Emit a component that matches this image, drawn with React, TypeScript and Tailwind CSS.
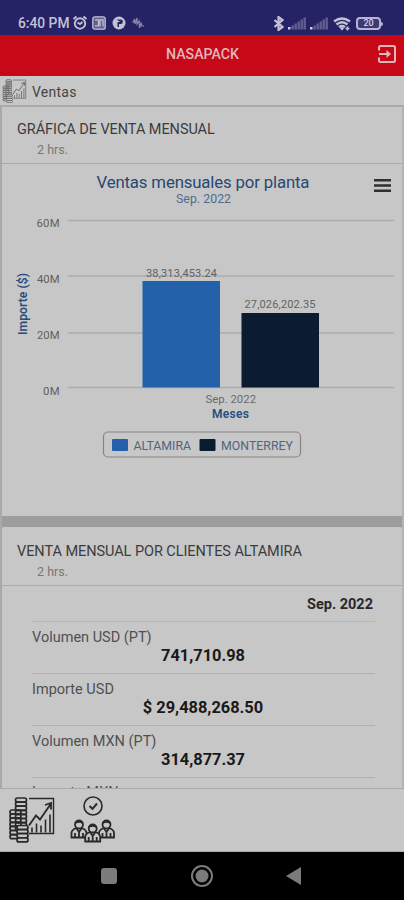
import React from "react";

function CoinsChartIcon({ className }: { className: string }) {
  const stack = (x: number, top: number, count: number) =>
    Array.from({ length: count }, (_, i) => (
      <rect key={`${x}-${i}`} x={x} y={top + i * 4.1} width="11" height="4.1" rx="2" />
    ));
  return (
    <svg viewBox="0 0 46 46" className={className} fill="none" stroke="currentColor" strokeWidth="1.7">
      <path d="M20 2h24.500v35H20" strokeWidth="1.400" />
      <path d="m20 29 7-10 4 4L42 7m-6 1.500 6-2v6.500" strokeWidth="1.800" />
      <path d="M23 36v-5m4.500 5v-9m4.500 9v-7M36.500 36V23M41 36V18" strokeWidth="1.600" />
      {stack(6.5, 1.5, 8)}
      {stack(1, 13.5, 7)}
      <g fill="#c7c7c7">{stack(8, 29, 4)}</g>
    </svg>
  );
}

function Person({ x, y }: { x: number; y: number }) {
  return (
    <g transform={`translate(${x} ${y})`}>
      <path d="M0 17.500V13c0-3 2-4 5-5h5c3 1 5 2 5 5v4.500Z" fill="#c7c7c7" />
      <circle cx="7.500" cy="4.500" r="4" fill="#c7c7c7" />
      <path d="M3.800 3q3.700-2.500 7.400 0M5 8.500l2.500 3.500L10 8.500M3.500 17v-4m8 4v-4M7.500 11v6" />
    </g>
  );
}

function TeamIcon() {
  return (
    <svg viewBox="0 0 46 47" className="h-[47px] w-[46px]" fill="none" stroke="currentColor" strokeWidth="1.800">
      <circle cx="23" cy="10" r="9" strokeWidth="1.600" />
      <path d="m19.500 10 3 2.800 4.500-5.300" strokeWidth="2" />
      <Person x={1.5} y={24} />
      <Person x={29} y={24} />
      <Person x={15.2} y={28} />
    </svg>
  );
}

function Signal() {
  return (
    <svg viewBox="0 0 19 13" className="h-[13px] w-[19px]" fill="#615e8e">
      <rect x="0" y="10" width="2.500" height="2.500" fill="#cfcfdb" />
      <rect x="3.500" y="8.500" width="2.400" height="4" />
      <rect x="6.500" y="6.500" width="2.400" height="6" />
      <rect x="9.500" y="4.500" width="2.400" height="8" />
      <rect x="12.500" y="2.500" width="2.400" height="10" />
      <rect x="15.500" y="0.500" width="2.400" height="12" />
    </svg>
  );
}

function StatusBar() {
  return (
    <div className="flex h-[35px] shrink-0 items-end justify-between bg-[#262266] pb-1 pl-[18px] pr-[21px] text-[#c3c2d2]">
      <div className="flex items-center">
        <span className="w-[54px] whitespace-nowrap text-[13.800px] font-medium leading-[16px]">6:40 PM</span>
        <svg viewBox="0 0 16 16" className="h-4 w-4" fill="none" stroke="currentColor" strokeWidth="1.900">
          <circle cx="8" cy="8.500" r="5.200" />
          <path d="M1.500 4 4.500 1.500M14.500 4l-3-2.500M5.500 7.500 8 9l2.500-2" />
        </svg>
        <svg viewBox="0 0 14 14" className="ml-[4px] h-[14px] w-[14px]" fill="none" stroke="currentColor" strokeWidth="1.300">
          <rect x="0.800" y="0.800" width="12.400" height="12.400" rx="2" fill="#615e8e" />
          <path d="M3 3.800h3.500v6H3M8 10.500V3.800h3v6.700" />
        </svg>
        <svg viewBox="0 0 14 14" className="ml-[6px] h-[14px] w-[14px]">
          <circle cx="7" cy="7" r="6.500" fill="currentColor" />
          <path d="M4.500 3.500h4.200a2.200 2.200 0 0 1 0 4.400H7v3.100H5.500V6h3" fill="#262266" />
        </svg>
        <svg viewBox="0 0 14 12" className="ml-[5px] h-3 w-[14px]" fill="none" stroke="#8c89ae" strokeWidth="1.200">
          <path d="M1 5h1.500l1-3 .5 5 2-6v6l2-3 .5 7L10 6l1 3h2" />
        </svg>
      </div>
      <div className="flex items-center">
        <svg viewBox="0 0 11 15" className="mr-[4px] h-[15px] w-[11px]" fill="none" stroke="currentColor" strokeWidth="2.200">
          <path d="m1.500 4 8 7-4 3V1l4 3-8 7" />
        </svg>
        <Signal />
        <span className="w-[3px]" />
        <Signal />
        <svg viewBox="0 0 18 14" className="ml-[4px] h-[14px] w-[18px]" fill="none" stroke="currentColor" strokeWidth="2.300">
          <path d="M1 4.500q8-6 16 0M3.500 7.500q5.500-4.500 11 0M6 10.200q3-2.400 6 0" />
          <path d="m9 9.500 2 2-2 2-2-2Z" fill="currentColor" stroke="none" />
          <path d="M12.500 11.500h4m-2-2v4" strokeWidth="1.500" />
        </svg>
        <span className="ml-[5px] flex h-[13px] w-[25px] items-center justify-center rounded-[4px] border-2 border-[#b7b5ce] bg-[#3d3975] text-[9px] font-medium leading-none text-[#d5d4df]">
          20
        </span>
        <span className="h-[4px] w-[2px] rounded-r bg-[#b7b5ce]" />
      </div>
    </div>
  );
}

function SalesChart() {
  const grid = [
    { y: 220.500, label: "60M", ty: 226.500, x: 36.5, w: 23 },
    { y: 276, label: "40M", ty: 282.500, x: 37, w: 22.5 },
    { y: 333, label: "20M", ty: 338.500, x: 37, w: 22.5 },
    { y: 387.500, label: "0M", ty: 394.500, x: 43, w: 16.5 },
  ];
  return (
    <svg viewBox="2 164 400 352" className="block h-[352px] w-[400px]" fontFamily="Roboto, sans-serif">
      <text x="96.500" y="188" textLength="213" fontSize="16.800" fill="#274873">Ventas mensuales por planta</text>
      <text x="176" y="202.500" textLength="55" fontSize="12.300" fill="#526b8f">Sep. 2022</text>
      <path d="M374 180.300h17M374 185.500h17M374 190.700h17" stroke="#303030" strokeWidth="2.600" />
      {grid.map((g) => (
        <g key={g.label}>
          <path d={`M67.500 ${g.y}H394`} stroke="#acacac" strokeWidth="1.400" />
          <text x={g.x} y={g.ty} textLength={g.w} fontSize="11.300" fill="#606060">{g.label}</text>
        </g>
      ))}
      <text transform="translate(26.500 335) rotate(-90)" textLength="62" fontSize="12.200" fontWeight="600" fill="#274d7c">Importe ($)</text>
      <rect x="142.500" y="281" width="77.500" height="106.500" fill="#2362aa" />
      <rect x="241.500" y="313" width="77.500" height="74.500" fill="#0b1c31" />
      <text x="146" y="276.500" textLength="71" fontSize="11" fill="#626262">38,313,453.24</text>
      <text x="244.500" y="308" textLength="71" fontSize="11" fill="#626262">27,026,202.35</text>
      <text x="205.500" y="402.500" textLength="50.500" fontSize="11.300" fill="#6a6a6a">Sep. 2022</text>
      <text x="212" y="418" textLength="37" fontSize="12" fontWeight="600" fill="#274d7c">Meses</text>
      <rect x="103.500" y="432" width="197" height="25" rx="4.500" fill="none" stroke="#858585" strokeWidth="1.200" />
      <rect x="112" y="439" width="16" height="12" rx="1" fill="#2362aa" />
      <text x="133.500" y="450.300" textLength="57.500" fontSize="12.300" fill="#50657f">ALTAMIRA</text>
      <rect x="199.500" y="439" width="16" height="12" rx="1" fill="#0b1c31" />
      <text x="221" y="450.300" textLength="72" fontSize="12.300" fill="#50657f">MONTERREY</text>
    </svg>
  );
}

function CardHeader({ title }: { title: string }) {
  return (
    <header className="h-[57px] shrink-0 border-b border-[#ababab] pl-[15px] pt-[13px]">
      <h2 className="whitespace-nowrap text-[14.500px] leading-[19px] tracking-[-0.060px] text-[#3c3c3c]">{title}</h2>
      <p className="pl-[20px] pt-[3px] text-[12.500px] leading-4 text-[#777]">2 hrs.</p>
    </header>
  );
}

const rows = [
  { label: "Volumen USD (PT)", value: "741,710.98" },
  { label: "Importe USD", value: "$ 29,488,268.50" },
  { label: "Volumen MXN (PT)", value: "314,877.37" },
];

export default function App() {
  return (
    <div className="flex h-[900px] w-[404px] flex-col overflow-hidden bg-[#c7c7c7] font-[Roboto,sans-serif]">
      <StatusBar />
      <header className="flex h-[41px] shrink-0 items-center bg-[#c60817] pl-[27px] pr-[8px] text-[#dfb7bb]">
        <h1 className="flex-1 pb-[3px] text-center text-[14.200px] font-medium leading-4">NASAPACK</h1>
        <svg viewBox="0 0 18 18" className="mb-[4px] h-[18px] w-[18px]" fill="none" stroke="currentColor" strokeWidth="2">
          <path d="M1 5.500V2.500A1.500 1.500 0 0 1 2.500 1h13A1.500 1.500 0 0 1 17 2.500v13a1.500 1.500 0 0 1-1.500 1.500h-13A1.500 1.500 0 0 1 1 15.500v-3M1 9h9" />
          <path d="M8.500 5v8l4.500-4Z" fill="currentColor" stroke="none" />
        </svg>
      </header>
      <div className="flex h-[31px] shrink-0 items-center border-b-2 border-[#aaa] pl-[2px] pr-2 text-[#686868]">
        <CoinsChartIcon className="h-[24px] w-[25px]" />
        <span className="pl-[5px] pt-[3px] text-[14px] tracking-[0.250px] text-[#454545]">Ventas</span>
      </div>
      <main className="flex h-[681px] shrink-0 flex-col gap-[11px] overflow-hidden border-x-2 border-l-[#a9a9a9] border-r-[#b3b3b3] bg-[#9d9d9d]">
        <section className="h-[409px] shrink-0 bg-[#c7c7c7]">
          <CardHeader title="GRÁFICA DE VENTA MENSUAL" />
          <SalesChart />
        </section>
        <section className="flex h-[261px] shrink-0 flex-col overflow-hidden rounded-t-[2px] bg-[#c7c7c7]">
          <div className="pt-[2px]">
            <CardHeader title="VENTA MENSUAL POR CLIENTES ALTAMIRA" />
          </div>
          <div className="ml-[30px] mr-[27px]">
            <p className="h-[36px] border-b border-[#b1b8c2] pr-[2px] pt-[10px] text-right text-[14.500px] font-bold leading-[18px] text-[#292929]">Sep. 2022</p>
            {rows.map((row) => (
              <div key={row.label} className="h-[52px] border-b border-[#aeb0c6] pt-[7px]">
                <p className="text-[14.500px] leading-[18px] text-[#505050]">{row.label}</p>
                <p className="pr-[1px] text-center text-[16.400px] font-bold leading-[18px] text-[#191919]">{row.value}</p>
              </div>
            ))}
            <p className="pt-[6px] text-[14.500px] leading-[18px] text-[#505050]">Importe MXN</p>
          </div>
        </section>
      </main>
      <nav className="flex h-[64px] shrink-0 gap-[15px] border-b border-t border-[#aaa] pl-[9px] pt-[7px] text-[#292929]">
        <CoinsChartIcon className="h-[47px] w-[46px]" />
        <TeamIcon />
      </nav>
      <footer className="flex h-[48px] shrink-0 items-center justify-between bg-black pl-[101px] pr-[102px] text-[#7b7b7b]">
        <span className="h-[16px] w-[16px] rounded-[3px] bg-[#7b7b7b]" />
        <svg viewBox="0 0 24 24" className="h-6 w-6">
          <circle cx="12" cy="12" r="10" fill="none" stroke="currentColor" strokeWidth="2" />
          <circle cx="12" cy="12" r="6.500" fill="currentColor" />
        </svg>
        <svg viewBox="0 0 16 18" className="h-[18px] w-[16px]" fill="currentColor"><path d="m0 9 15-9v18Z" /></svg>
      </footer>
    </div>
  );
}
